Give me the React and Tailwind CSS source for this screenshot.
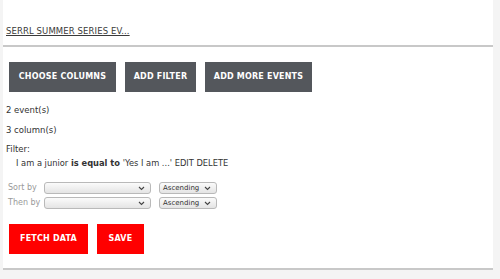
import React from 'react';

const font = { fontFamily: '"DejaVu Sans", "Liberation Sans", sans-serif' };

const Chevron = () => (
    <svg width="7" height="5" viewBox="0 0 7 5" className="shrink-0">
        <path d="M1 1 L3.5 3.5 L6 1" fill="none" stroke="#444" strokeWidth="1.1" />
    </svg>
);

const FakeSelect = ({ width, label }) => (
    <div
        className={`${width} h-[12px] flex items-center justify-between pl-[3px] pr-[5px] rounded-[3px] border border-[#b9b9b9] bg-gradient-to-b from-[#fbfbfb] to-[#e4e4e4] text-[7px] text-[#333]`}
    >
        <span className="leading-none">{label}</span>
        <Chevron />
    </div>
);

const SortRow = ({ label }) => (
    <div className="flex items-center h-[12px]">
        <span className="w-[36px] text-[8px] text-[#9a9a9a] leading-none">{label}</span>
        <FakeSelect width="w-[107px]" label="" />
        <div className="w-[8px]" />
        <FakeSelect width="w-[58px]" label="Ascending" />
    </div>
);

const DarkButton = ({ width, children }) => (
    <button className={`${width} h-[30px] bg-[#54575c] text-white text-[8px] font-bold tracking-[0.2px] flex items-center justify-center`}>
        {children}
    </button>
);

const RedButton = ({ width, children }) => (
    <button className={`${width} h-[30px] bg-[#ff0000] text-white text-[8px] font-bold tracking-[0.2px] flex items-center justify-center`}>
        {children}
    </button>
);

export default function App() {
    return (
        <div className="min-h-screen bg-[#f4f4f4] pl-[3px] pr-[7px]" style={font}>
            {/* event link card */}
            <div className="bg-white h-[47px] border-b-2 border-[#c8c8c8] pl-[3px] pt-[17px]">
                <a href="#" className="text-[8.5px] tracking-[0.1px] text-[#3a3a3a] underline leading-[12px]">
                    SERRL SUMMER SERIES EV...
                </a>
            </div>

            {/* query builder card */}
            <div className="bg-white border-b-2 border-[#c8c8c8] pt-[15px] pb-[14px] pl-[3px]">
                <div className="flex gap-[9px] ml-[3px]">
                    <DarkButton width="w-[107px]">CHOOSE COLUMNS</DarkButton>
                    <DarkButton width="w-[71px]">ADD FILTER</DarkButton>
                    <DarkButton width="w-[107px]">ADD MORE EVENTS</DarkButton>
                </div>

                <div className="mt-[10px] text-[8.5px] leading-[16px] text-[#333]">2 event(s)</div>
                <div className="mt-[4px] text-[8.5px] leading-[16px] text-[#333]">3 column(s)</div>
                <div className="mt-[3px] text-[8.5px] leading-[16px] text-[#333]">Filter:</div>
                <div className="ml-[10px] text-[8.3px] leading-[12px] text-[#333]">
                    I am a junior <b>is equal to</b> 'Yes I am ...' EDIT DELETE
                </div>

                <div className="mt-[13px] ml-[2px] flex flex-col gap-[3px]">
                    <SortRow label="Sort by" />
                    <SortRow label="Then by" />
                </div>

                <div className="mt-[15px] ml-[3px] flex gap-[9px]">
                    <RedButton width="w-[79px]">FETCH DATA</RedButton>
                    <RedButton width="w-[47px]">SAVE</RedButton>
                </div>
            </div>
        </div>
    );
}
